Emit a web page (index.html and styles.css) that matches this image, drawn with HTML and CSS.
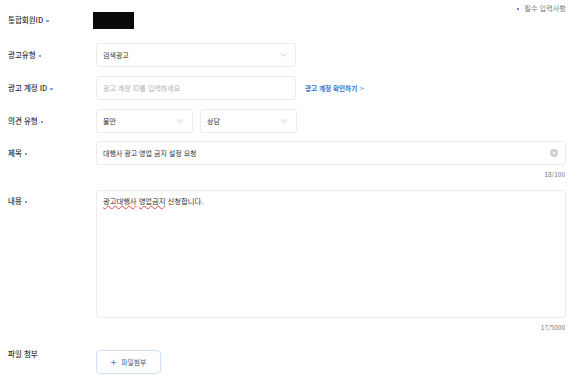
FILE: index.html
```html
<!DOCTYPE html>
<html lang="ko">
<head>
<meta charset="utf-8">
<link rel="stylesheet" href="styles.css">
</head>
<body>
<div class="page">
  <div class="note"><span class="dot"></span>필수 입력사항</div>

  <div class="row r1">
    <div class="label">통합회원ID<span class="dot"></span></div>
    <div class="masked"></div>
  </div>

  <div class="row r2">
    <div class="label">광고유형<span class="dot"></span></div>
    <div class="field select w200"><span>검색광고</span><svg class="chev" viewBox="0 0 8 5" width="7" height="4"><path d="M0.5 0.5 L4 4 L7.5 0.5" fill="none" stroke="#b5b5b5" stroke-width="0.9"/></svg></div>
  </div>

  <div class="row r3">
    <div class="label">광고 계정 ID<span class="dot"></span></div>
    <div class="field w200"><span class="ph">광고 계정 ID를 입력하세요</span></div>
    <a class="link">광고 계정 확인하기 <span class="gt">&gt;</span></a>
  </div>

  <div class="row r4">
    <div class="label">의견 유형<span class="dot"></span></div>
    <div class="field select w97"><span>불만</span><svg class="chev" viewBox="0 0 8 5" width="7" height="4"><path d="M0.5 0.5 L4 4 L7.5 0.5" fill="none" stroke="#b5b5b5" stroke-width="0.9"/></svg></div>
    <div class="field select w97 ml7"><span>상담</span><svg class="chev" viewBox="0 0 8 5" width="7" height="4"><path d="M0.5 0.5 L4 4 L7.5 0.5" fill="none" stroke="#b5b5b5" stroke-width="0.9"/></svg></div>
  </div>

  <div class="row r5">
    <div class="label">제목<span class="dot"></span></div>
    <div class="field grow"><span>대행사 광고 영업 금지 설정 요청</span><svg class="clear" viewBox="0 0 10 10" width="8" height="8"><circle cx="5" cy="5" r="5" fill="#cfcfcf"/><path d="M3.3 3.3 L6.7 6.7 M6.7 3.3 L3.3 6.7" stroke="#fff" stroke-width="1.1"/></svg></div>
  </div>
  <div class="counter c1">18/100</div>

  <div class="row top r6">
    <div class="label lt">내용<span class="dot"></span></div>
    <div class="field area grow"><span><span class="spell">광고대행사</span> <span class="spell">영업금지</span> 신청합니다.</span></div>
  </div>
  <div class="counter c2">17/5000</div>

  <div class="row top r7">
    <div class="label lf">파일 첨부</div>
    <button class="btn"><span class="plus">+</span>파일첨부</button>
  </div>
</div>
</body>
</html>
```

FILE: styles.css
```css
html, body {
  margin: 0;
  padding: 0;
  background: #ffffff;
}
.page {
  padding: 0 14px 0 8px;
  font-family: "Noto Sans CJK KR", "Noto Sans", sans-serif;
  color: #333333;
}
.note {
  padding-top: 3px;
  height: 10px;
  line-height: 10px;
  font-size: 7.2px;
  color: #7a7a7a;
  text-align: right;
}
.note .dot {
  margin: 0 5px 0 0;
  background: #5b8def;
}
.dot {
  display: inline-block;
  width: 2.5px;
  height: 2.5px;
  background: #7aa5ec;
  margin-left: 3px;
  vertical-align: middle;
}
.row {
  display: flex;
  align-items: center;
}
.row.top {
  align-items: flex-start;
}
.label {
  width: 88px;
  flex: none;
  font-size: 7.5px;
  line-height: 10px;
  font-weight: 500;
  color: #333333;
}
.lt {
  padding-top: 6px;
}
.lf {
  margin-top: -1px;
}
.r1 {
  margin-top: -2px;
  height: 18px;
}
.masked {
  width: 41px;
  height: 17px;
  background: #0a0a0a;
  margin-left: -3px;
}
.r2 { margin-top: 14px; }
.r3 { margin-top: 9px; }
.r4 { margin-top: 9px; }
.r5 { margin-top: 8px; }
.r6 { margin-top: 11px; }
.r7 { margin-top: 18px; }
.field {
  box-sizing: border-box;
  height: 24px;
  border: 1px solid #ececec;
  border-radius: 3px;
  display: flex;
  align-items: center;
  justify-content: space-between;
  padding: 0 8px 0 6px;
  font-size: 7px;
  color: #333333;
  background: #fff;
}
.w200 { width: 200px; }
.w97 { width: 97px; }
.ml7 { margin-left: 7px; }
.grow { flex: 1; }
.ph { color: #b0b0b0; }
.chev { display: block; }
.clear { display: block; margin-right: -1px; }
.link {
  margin-left: 9px;
  font-size: 6.6px;
  font-weight: 700;
  color: #3d6fcf;
}
.link .gt {
  font-weight: 400;
  margin-left: 1px;
}
.counter {
  text-align: right;
  font-size: 6.5px;
  line-height: 10px;
  color: #777777;
  margin-top: 4px;
  padding-right: 1px;
}
.area {
  height: 128px;
  align-items: flex-start;
  padding: 5px 8px 0 6px;
  font-size: 7.3px;
  line-height: 10px;
}
.spell {
  text-decoration: underline wavy #e04a4a;
  text-decoration-thickness: 0.6px;
  text-underline-offset: 1px;
}
.btn {
  box-sizing: border-box;
  width: 65px;
  height: 24px;
  border: 1px solid #cfe0f8;
  border-radius: 4px;
  background: #fff;
  font-family: "Noto Sans CJK KR", "Noto Sans", sans-serif;
  font-size: 6.8px;
  color: #3b5a8c;
  padding: 0;
  display: flex;
  align-items: center;
  justify-content: center;
}
.plus {
  font-size: 10px;
  line-height: 10px;
  color: #3d6fcf;
  margin-right: 5px;
  font-weight: 400;
}
```
